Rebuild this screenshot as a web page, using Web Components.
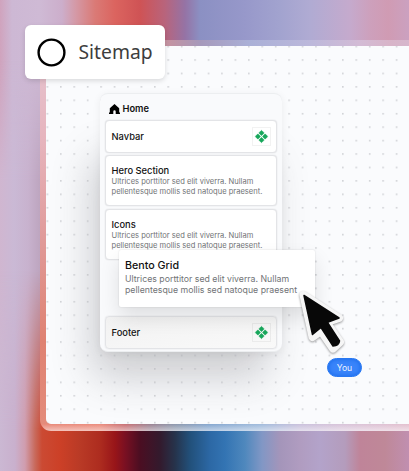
<!DOCTYPE html>
<html lang="en"><head><meta charset="utf-8"><title>Sitemap</title>
<style>html,body{margin:0;width:409px;height:471px;overflow:hidden}body{font-family:Inter,"Liberation Sans",sans-serif}</style></head>
<body>
<site-backdrop>
  <site-canvas>
    <page-card>
      <section-row name="Navbar" kind="bar"></section-row>
      <section-row name="Hero Section">Ultrices porttitor sed elit viverra. Nullam<br>pellentesque mollis sed natoque praesent.</section-row>
      <section-row name="Icons">Ultrices porttitor sed elit viverra. Nullam<br>pellentesque mollis sed natoque praesent.</section-row>
      <section-row name="Footer" kind="bar" class="foot"></section-row>
    </page-card>
  </site-canvas>
  <title-tab slot="over">Sitemap</title-tab>
  <drag-card slot="over" name="Bento Grid">Ultrices porttitor sed elit viverra. Nullam<br>pellentesque mollis sed natoque praesent</drag-card>
  <user-cursor slot="over">You</user-cursor>
</site-backdrop>
<script>
const define=(tag,html)=>customElements.define(tag,class extends HTMLElement{
  constructor(){super();this.attachShadow({mode:'open'})}
  connectedCallback(){this.shadowRoot.innerHTML=typeof html==='function'?html(this):html}
});
const petal=a=>`<rect x="7.55" y="3.95" width="3.9" height="3.9" rx=".7" transform="rotate(${a} 9.5 9.5) rotate(45 9.5 5.9)" stroke="#17a75b" stroke-width=".4"/>`;
const blocks=`<svg viewBox="0 0 19 19" width="19" height="19"><rect x=".5" y=".5" width="18" height="18" fill="none" stroke="#000" stroke-opacity=".05"/><g fill="#17a75b">${[0,90,180,270].map(petal).join('')}</g></svg>`;
define('site-backdrop',`<style>
:host{display:block;position:relative;box-sizing:border-box;width:409px;height:471px;padding:40px 0 40px 40px;overflow:hidden;
background:linear-gradient(90deg,#d0a3bd 0,#cdb8d4 12px,#cfbad5 40px,#ccaecb 62px,#d49aa8 75px,#da7a76 95px,#db645f 115px,#cf5355 140px,#b8647c 165px,#9573a5 185px,#8b90c3 200px,#9798ca 245px,#a2a3cf 280px,#b0abd3 310px,#c5aacd 350px,#cda0bc 370px,#d09bb3 388px,#cba1c0 409px)}
.low,.mid{position:absolute;inset:0}
.mid{width:40px;background:linear-gradient(90deg,#d0b6d0,#cab9d5 14px,#c8b2ce 28px,#bda5bf 40px);-webkit-mask:linear-gradient(transparent 60px,#000 180px);mask:linear-gradient(transparent 60px,#000 180px)}
.low{background:linear-gradient(90deg,#cbb8d3 0,#c9b0cd 15px,#d09dae 25px,#c86a5c 35px,#cb4a33 42px,#cc4027 60px,#b93a26 80px,#ad2c1f 100px,#981519 115px,#7a1022 125px,#4b0e22 140px,#331a2d 160px,#26334b 175px,#22507a 190px,#2c68a5 210px,#3374b3 225px,#4f88bd 245px,#8197c5 262px,#a495ba 280px,#b09cc0 300px,#b3a3ca 320px,#b49cbc 345px,#bf8499 360px,#bf8898 385px,#c08fb0 409px);-webkit-mask:linear-gradient(transparent 270px,#000 430px);mask:linear-gradient(transparent 270px,#000 430px)}
</style><div class="mid"></div><div class="low"></div><slot></slot><slot name="over"></slot>`);
define('site-canvas',`<style>
:host{display:block;position:relative;box-sizing:border-box;width:380px;height:391px;padding:6px 0 7px 6px;border-radius:9px 0 0 11px;
background:linear-gradient(90deg,#cca6bc 0,#d58d92 80px,#c393a2 130px,#a699bb 160px,#aab0d7 210px,#bcb8db 270px,#d3bbd5 320px,#d8b4c8 350px,#d5b8ce 380px) 0 0/100% 6px no-repeat,
linear-gradient(#fff0,#ffffff80) 0 100%/100% 7px no-repeat,
linear-gradient(90deg,#e88878,#eb8c7d 60px,#c87074 85px,#9b8292 110px,#8d98ad 135px,#85a7d0 170px,#a0bbdc 220px,#cac1dc 260px,#d8c4da 300px,#e3c0cf 369px) 0 100%/100% 7px no-repeat,
linear-gradient(#e6c6d2 0,#e6b4bd 100px,#e09a99 200px,#df8272 300px,#e48c7b 391px)}
.grid{box-sizing:border-box;height:378px;border-radius:4px 0 0 5px;padding:47px 0 0 54px;overflow:hidden;position:relative;
background:#fafbfd}
svg{position:absolute;inset:0}slot{position:relative;display:block}
</style><div class="grid"><svg width="374" height="378"><defs><pattern id="p" x="-5.2" y="-6" width="13.43" height="13.43" patternUnits="userSpaceOnUse"><rect x="6" y="6" width="1.2" height="1.2" fill="#afb1b7"/></pattern><filter id="b" x="-50%" y="-50%" width="200%" height="200%"><feGaussianBlur stdDeviation="20"/></filter></defs><rect x="45" y="110" width="178" height="222" rx="15" fill="#54575c" opacity=".27" filter="url(#b)"/><rect width="374" height="378" fill="url(#p)"/></svg><slot></slot></div>`);
define('page-card',`<style>
:host{display:flex;position:relative;box-sizing:border-box;width:182px;height:259px;padding:7px 5px 2px;border:1px solid #eceef0;border-width:1px 0;border-radius:8px;background:#f9fafc;flex-direction:column;gap:2.7px;box-shadow:0 2px 9px #0001}
header{height:16.3px;flex:none;display:flex;align-items:center;gap:2.5px;padding-left:4px;font:600 9.3px/15px Inter,sans-serif;color:#111}
svg{display:block;margin-top:-1px}header span{margin-top:-1px}::slotted(.foot){margin-top:auto}
</style><header><svg width="11" height="10" viewBox="0 0 11 10"><path d="M5.5 0 10.2 4.2V8.4H11V10H6.7V7.4Q6.7 6.2 5.5 6.2T4.3 7.4V10H0V8.4H.8V4.2Z" fill="#000"/></svg><span>Home</span></header><slot></slot>`);
define('section-row',e=>{const bar=e.getAttribute('kind')==='bar';return `<style>
:host{display:flex;box-sizing:border-box;height:${bar?32.6:51}px;flex:none;align-items:${bar?'center':'flex-start'};justify-content:space-between;border:1px solid #e3e4e7;border-radius:4px;background:#fff;padding:${bar?'.6px 5.5px 0':'8px 5.5px 0'};box-shadow:0 0 1.5px #00000020}
:host(.foot){background:linear-gradient(170deg,#f2f2f2,#f9f9f9);padding-top:0}
b{display:block;font:550 9.35px/13px Inter,sans-serif;color:#111}
p{margin:0;font:400 7.57px/10px Inter,sans-serif;color:#717376;white-space:nowrap}svg{display:block}
</style><div><b>${e.getAttribute('name')}</b>${bar?'':'<p><slot></slot></p>'}</div>${bar?blocks:''}`});
define('title-tab',`<style>
:host{position:absolute;left:25px;top:25px;box-sizing:border-box;width:140px;height:54px;display:flex;align-items:center;gap:13px;padding-left:11.5px;background:#fff;border-radius:6px;box-shadow:0 2px 5px #0002;font:400 19.3px/54px "Noto Sans",sans-serif;color:#3d3d3d}
</style><svg width="29" height="29"><circle cx="14.5" cy="14.5" r="12.9" fill="none" stroke="#000" stroke-width="2.4"/></svg><span><slot></slot></span>`);
define('drag-card',e=>`<style>
:host{position:absolute;left:119px;top:250px;box-sizing:border-box;width:196px;height:57px;padding:8px 6px;background:#fff;border-radius:2px;box-shadow:0 0 2px #0002,0 10px 20px #0000001c}
b{display:block;font:550 10.7px/16.4px Inter,sans-serif;color:#111}
p{margin:0;font:400 8.75px/11px Inter,sans-serif;color:#717376;white-space:nowrap}
</style><b>${e.getAttribute('name')}</b><p><slot></slot></p>`);
define('user-cursor',`<style>
:host{position:absolute;left:292px;top:284px;width:75px;height:95px}
svg{position:absolute;inset:0;filter:drop-shadow(0 1px 1px #0006)}
span{position:absolute;left:35px;top:74px;width:35px;height:19px;box-sizing:border-box;border-radius:10px;background:#3984fa;border:1px solid #2878f2;box-shadow:inset 0 0 4px #1467e8;display:flex;align-items:center;justify-content:center;color:#eaf3ff;font:400 8.6px Inter,sans-serif}
</style><svg width="75" height="95" viewBox="0 0 75 95"><path d="M11.5 11 47 34 34.5 38.2 48 58 41 64.5 29 47 20.5 53Z" fill="#f6f6f6" stroke="#f6f6f6" stroke-width="8" stroke-linejoin="round"/><path d="M12 11.5 47 34 35.5 38.4 47.5 57Q47 62 41 62L29 43.5 20.5 50.5Z" fill="#080808" stroke="#080808" stroke-width="1.5" stroke-linejoin="round"/></svg><span><slot></slot></span>`);
</script></body></html>
